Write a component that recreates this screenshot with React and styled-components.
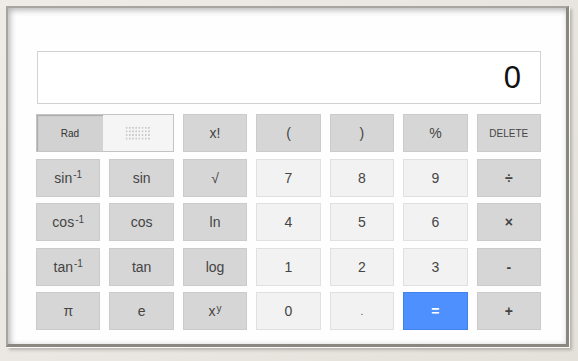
import React from 'react';
import styled, { createGlobalStyle } from 'styled-components';

const GlobalStyle = createGlobalStyle`
  html, body {
    margin: 0;
    padding: 0;
    background: #e9e6e1;
    font-family: "Liberation Sans", Arial, sans-serif;
  }
`;

const Frame = styled.div`
  width: 578px;
  height: 361px;
  box-sizing: border-box;
  padding: 6px 9px 14px 6px;
  background: linear-gradient(135deg, #efece8 0%, #e4e0da 100%);
`;

const Panel = styled.div`
  box-sizing: border-box;
  height: 100%;
  background: #fefefe;
  border-style: solid;
  border-width: 2px 3px 3px 2px;
  border-color: #a8a49e #8a8680 #8a8680 #a8a49e;
  box-shadow: inset 2px 2px 6px rgba(0, 0, 0, 0.3), 1px 1px 0 #fbfaf8, 3px 3px 3px rgba(0, 0, 0, 0.22);
  padding: 43px 0 0 28px;
`;

const Display = styled.div`
  box-sizing: border-box;
  width: 504px;
  height: 53px;
  border: 1px solid #d2d2d2;
  background: #fff;
  display: flex;
  align-items: center;
  justify-content: flex-end;
  padding-right: 19px;
  font-size: 31px;
  color: #111;
  margin-left: 1px;
`;

const Pad = styled.div`
  margin-top: 10px;
  width: 505px;
  display: grid;
  grid-template-columns: repeat(7, 1fr);
  grid-auto-rows: 38px;
  column-gap: 9px;
  row-gap: 6.5px;
`;

const Key = styled.div`
  box-sizing: border-box;
  display: flex;
  align-items: center;
  justify-content: center;
  font-size: ${p => (p.small ? '10px' : '14px')};
  font-weight: ${p => (p.bold ? 'bold' : 'normal')};
  color: ${p => (p.kind === 'eq' ? '#fff' : '#444')};
  background: ${p =>
    p.kind === 'eq' ? '#4d90fe' : p.kind === 'num' ? '#f2f2f2' : '#d6d6d6'};
  border: 1px solid
    ${p => (p.kind === 'eq' ? '#3f82ee' : p.kind === 'num' ? '#e0e0e0' : '#cbcbcb')};

  sup {
    font-size: 10px;
    position: relative;
    top: -3px;
    margin-left: 1px;
  }
`;

const Toggle = styled.div`
  grid-column: span 2;
  box-sizing: border-box;
  display: flex;
  border: 1px solid #c4c4c4;
`;

const Rad = styled.div`
  flex: 0 0 66px;
  display: flex;
  align-items: center;
  justify-content: center;
  font-size: 10px;
  color: #333;
  background: #d2d2d2;
  box-shadow: inset 1px 1px 1px rgba(0, 0, 0, 0.2);
`;

const Deg = styled.div`
  flex: 1;
  display: flex;
  align-items: center;
  justify-content: center;
  background: #f5f5f5;
`;

const Dots = styled.span`
  width: 25px;
  height: 14px;
  background-image: radial-gradient(circle, #c8c8c8 1px, transparent 1.2px);
  background-size: 3.2px 3.6px;
`;

const rows = [
  [null, ['x!'], ['('], [')'], ['%'], ['DELETE', 'op', { small: true }]],
  [[<>sin<sup>-1</sup></>], ['sin'], ['√'], ['7', 'num'], ['8', 'num'], ['9', 'num'], ['÷', 'op', { bold: true }]],
  [[<>cos<sup>-1</sup></>], ['cos'], ['ln'], ['4', 'num'], ['5', 'num'], ['6', 'num'], ['×', 'op', { bold: true }]],
  [[<>tan<sup>-1</sup></>], ['tan'], ['log'], ['1', 'num'], ['2', 'num'], ['3', 'num'], ['-', 'op', { bold: true }]],
  [['π'], ['e'], [<>x<sup>y</sup></>], ['0', 'num'], ['.', 'num', { small: true }], ['=', 'eq', { bold: true }], ['+', 'op', { bold: true }]],
];

export default function App() {
  return (
    <>
      <GlobalStyle />
      <Frame>
        <Panel>
          <Display>0</Display>
          <Pad>
            {rows.flatMap((row, r) =>
              row.map((k, c) =>
                k === null ? (
                  <Toggle key={`${r}-${c}`}>
                    <Rad>Rad</Rad>
                    <Deg>
                      <Dots />
                    </Deg>
                  </Toggle>
                ) : (
                  <Key key={`${r}-${c}`} kind={k[1] || 'fn'} {...(k[2] || {})}>
                    {k[0]}
                  </Key>
                )
              )
            )}
          </Pad>
        </Panel>
      </Frame>
    </>
  );
}
